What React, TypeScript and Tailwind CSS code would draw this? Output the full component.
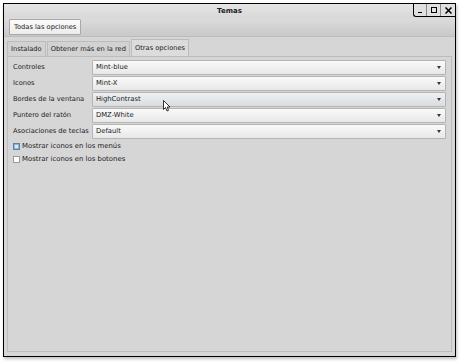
import React from "react";

const font = { fontFamily: '"DejaVu Sans", "Liberation Sans", sans-serif' };

function Combo({ value, hover }: { value: string; hover?: boolean }) {
  return (
    <div
      className={
        "flex-1 h-[15px] flex items-center justify-between pl-[3px] pr-[4px] border border-[#b4b4b4] rounded-[1px] " +
        (hover
          ? "bg-gradient-to-b from-[#eef0f2] to-[#d9dde0]"
          : "bg-gradient-to-b from-[#fafafa] to-[#e8e8e8]")
      }
    >
      <span className="text-[6.8px] text-[#1a1a1a] leading-none">{value}</span>
      <svg width="4" height="3" viewBox="0 0 4 3">
        <polygon points="0,0 4,0 2,3" fill="#333" />
      </svg>
    </div>
  );
}

function Row({ label, value, hover }: { label: string; value: string; hover?: boolean }) {
  return (
    <div className="flex items-center h-[16px]">
      <div className="w-[84px] pl-[5px] whitespace-nowrap text-[6.7px] text-[#222] leading-none">{label}</div>
      <Combo value={value} hover={hover} />
    </div>
  );
}

export default function App() {
  return (
    <div className="w-[460px] h-[362px] bg-white pt-[3px] pl-[3px]" style={font}>
      <div className="relative w-[453px] h-[354px] border border-black bg-[#d6d6d6] flex flex-col shadow-[1px_2px_3px_rgba(0,0,0,0.25)]">
        {/* title bar */}
        <div className="h-[14px] flex items-center justify-center bg-gradient-to-b from-[#e6e6e6] to-[#d8d8d8]">
          <span className="text-[7px] font-bold text-[#222] leading-none">Temas</span>
        </div>
        <div className="absolute right-[0px] top-[0px] flex h-[13px] border-l border-b border-black rounded-bl-[3px] bg-[#e0e0e0]">
          <div className="w-[13px] flex items-end justify-center pb-[3px] border-r border-[#888]">
            <div className="w-[4px] h-[1.5px] bg-black" />
          </div>
          <div className="w-[14px] flex items-center justify-center border-r border-[#888]">
            <div className="w-[6px] h-[6px] border-[1.5px] border-black" />
          </div>
          <div className="w-[14px] flex items-center justify-center">
            <svg width="7" height="7" viewBox="0 0 7 7">
              <path d="M0.5 0.5 L6.5 6.5 M6.5 0.5 L0.5 6.5" stroke="black" strokeWidth="1.5" />
            </svg>
          </div>
        </div>
        {/* toolbar */}
        <div className="h-[19px] flex items-center pl-[5px] bg-gradient-to-b from-[#dcdcdc] to-[#c9c9c9] border-b border-[#bdbdbd]">
          <div className="h-[16px] px-[4px] flex items-center bg-gradient-to-b from-[#fbfbfb] to-[#ececec] border border-[#a9a9a9] rounded-[1px]">
            <span className="text-[6.7px] text-[#222] leading-none">Todas las opciones</span>
          </div>
        </div>
        {/* tabs */}
        <div className="flex-1 flex flex-col px-[3px] pt-[2px] pb-[4px]">
          <div className="flex items-end h-[17px] gap-[1px]">
            <div className="h-[15px] px-[3px] flex items-center border border-b-0 border-[#bcbcbc] bg-[#d2d2d2]">
              <span className="text-[6.7px] text-[#222] leading-none">Instalado</span>
            </div>
            <div className="h-[15px] px-[3px] flex items-center border border-b-0 border-[#bcbcbc] bg-[#d2d2d2]">
              <span className="text-[6.7px] text-[#222] leading-none">Obtener más en la red</span>
            </div>
            <div className="h-[17px] px-[3px] flex items-center border border-b-0 border-[#bcbcbc] bg-[#dcdcdc]">
              <span className="text-[6.7px] text-[#222] leading-none">Otras opciones</span>
            </div>
          </div>
          <div className="flex-1 border border-[#bcbcbc] bg-[#d6d6d6] flex flex-col pt-[2px] pr-[5px]">
            <Row label="Controles" value="Mint-blue" />
            <Row label="Iconos" value="Mint-X" />
            <Row label="Bordes de la ventana" value="HighContrast" hover />
            <Row label="Puntero del ratón" value="DMZ-White" />
            <Row label="Asociaciones de teclas" value="Default" />
            <div className="flex items-center h-[13px] pl-[5px] gap-[2px] mt-[1px]">
              <div className="w-[7px] h-[7px] border border-[#5f82a8] bg-[#8db3db] flex items-center justify-center">
                <div className="w-[3px] h-[3px] bg-[#dcebfa]" />
              </div>
              <span className="text-[6.9px] text-[#222] leading-none">Mostrar iconos en los menús</span>
            </div>
            <div className="flex items-center h-[13px] pl-[5px] gap-[2px]">
              <div className="w-[7px] h-[7px] border border-[#9a9a9a] bg-white" />
              <span className="text-[6.9px] text-[#222] leading-none">Mostrar iconos en los botones</span>
            </div>
          </div>
        </div>
        {/* cursor */}
        <svg className="absolute left-[159px] top-[96px]" width="8" height="12" viewBox="0 0 8 12">
          <path d="M0.5 0.5 L0.5 9.5 L2.5 7.5 L4 11 L5.5 10.3 L4.2 7 L7 7 Z" fill="white" stroke="black" strokeWidth="0.8" />
        </svg>
      </div>
    </div>
  );
}
